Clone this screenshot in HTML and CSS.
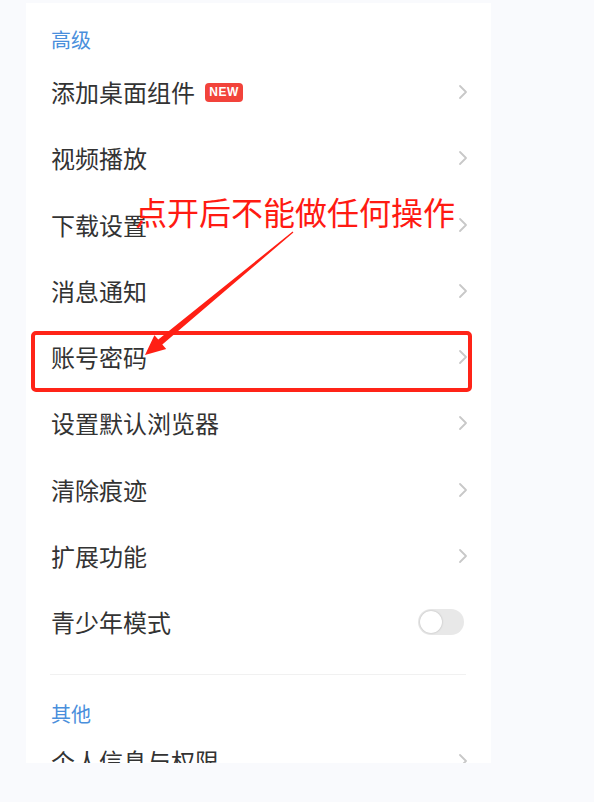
FILE: index.html
```html
<!DOCTYPE html>
<html lang="zh-CN">
<head>
<meta charset="utf-8">
<link rel="stylesheet" href="styles.css">
</head>
<body>
<div class="page">
  <div class="card">
    <div class="section-title first">高级</div>
    <div class="row"><span class="label">添加桌面组件</span><span class="badge">NEW</span><span class="chev"><svg width="10" height="16" viewBox="0 0 10 16"><path d="M2 2 L8 8 L2 14" fill="none" stroke="#c8c8c8" stroke-width="1.8" stroke-linecap="round" stroke-linejoin="round"/></svg></span></div>
    <div class="row"><span class="label">视频播放</span><span class="chev"><svg width="10" height="16" viewBox="0 0 10 16"><path d="M2 2 L8 8 L2 14" fill="none" stroke="#c8c8c8" stroke-width="1.8" stroke-linecap="round" stroke-linejoin="round"/></svg></span></div>
    <div class="row"><span class="label">下载设置</span><span class="chev"><svg width="10" height="16" viewBox="0 0 10 16"><path d="M2 2 L8 8 L2 14" fill="none" stroke="#c8c8c8" stroke-width="1.8" stroke-linecap="round" stroke-linejoin="round"/></svg></span></div>
    <div class="row"><span class="label">消息通知</span><span class="chev"><svg width="10" height="16" viewBox="0 0 10 16"><path d="M2 2 L8 8 L2 14" fill="none" stroke="#c8c8c8" stroke-width="1.8" stroke-linecap="round" stroke-linejoin="round"/></svg></span></div>
    <div class="row"><span class="label">账号密码</span><span class="chev"><svg width="10" height="16" viewBox="0 0 10 16"><path d="M2 2 L8 8 L2 14" fill="none" stroke="#c8c8c8" stroke-width="1.8" stroke-linecap="round" stroke-linejoin="round"/></svg></span></div>
    <div class="row"><span class="label">设置默认浏览器</span><span class="chev"><svg width="10" height="16" viewBox="0 0 10 16"><path d="M2 2 L8 8 L2 14" fill="none" stroke="#c8c8c8" stroke-width="1.8" stroke-linecap="round" stroke-linejoin="round"/></svg></span></div>
    <div class="row"><span class="label">清除痕迹</span><span class="chev"><svg width="10" height="16" viewBox="0 0 10 16"><path d="M2 2 L8 8 L2 14" fill="none" stroke="#c8c8c8" stroke-width="1.8" stroke-linecap="round" stroke-linejoin="round"/></svg></span></div>
    <div class="row"><span class="label">扩展功能</span><span class="chev"><svg width="10" height="16" viewBox="0 0 10 16"><path d="M2 2 L8 8 L2 14" fill="none" stroke="#c8c8c8" stroke-width="1.8" stroke-linecap="round" stroke-linejoin="round"/></svg></span></div>
    <div class="row"><span class="label">青少年模式</span><span class="toggle"><span class="knob"></span></span></div>
    <div class="divider"></div>
    <div class="section-title second">其他</div>
    <div class="row"><span class="label">个人信息与权限</span><span class="chev"><svg width="10" height="16" viewBox="0 0 10 16"><path d="M2 2 L8 8 L2 14" fill="none" stroke="#c8c8c8" stroke-width="1.8" stroke-linecap="round" stroke-linejoin="round"/></svg></span></div>
  </div>

  <div class="mark-box"></div>
  <div class="mark-text">点开后不能做任何操作</div>
  <svg class="mark-arrow" width="594" height="802" viewBox="0 0 594 802">
    <polygon points="293.4,232.5 292.6,231.5 158.3,339.6 154.4,335.2 145,355 166.2,349.1 162.3,344.6" fill="#ff1f14"/>
  </svg>
</div>
</body>
</html>
```

FILE: styles.css
```css
html, body {
  margin: 0;
  padding: 0;
  background: #f9fafd;
}

.page {
  position: relative;
  width: 594px;
  height: 802px;
  overflow: hidden;
  font-family: "Noto Sans CJK SC", "Noto Sans", sans-serif;
}

.card {
  margin-left: 26px;
  margin-top: 3px;
  width: 465px;
  height: 760px;
  background: #ffffff;
  overflow: hidden;
  box-sizing: border-box;
  padding: 24px 25px 0 25px;
}

.section-title {
  font-size: 20px;
  line-height: 26px;
  height: 26px;
  color: #4a8fdc;
}

.section-title.first {
  margin-bottom: 6px;
}

.section-title.second {
  margin-top: 26px;
  margin-bottom: 1px;
}

.row {
  display: flex;
  align-items: center;
  height: 66.25px;
}

.label {
  font-size: 24px;
  line-height: 30px;
  color: #333333;
}

.badge {
  margin-left: 10px;
  width: 38px;
  height: 19px;
  line-height: 19px;
  border-radius: 4px;
  background: #f2433b;
  color: #ffffff;
  font-family: "Liberation Sans", "Noto Sans", sans-serif;
  font-weight: bold;
  font-size: 12px;
  text-align: center;
  letter-spacing: 0.5px;
}

.chev {
  margin-left: auto;
  width: 10px;
  height: 16px;
  margin-right: -2px;
  display: flex;
}

.toggle {
  margin-left: auto;
  margin-right: 2px;
  width: 46px;
  height: 26px;
  border-radius: 13px;
  background: #e8e8e8;
  position: relative;
}

.knob {
  position: absolute;
  left: 2px;
  top: 2px;
  width: 22px;
  height: 22px;
  border-radius: 50%;
  background: #ffffff;
  box-shadow: 0 0 2px rgba(0, 0, 0, 0.25);
}

.divider {
  margin-top: 19px;
  height: 1px;
  background: #f1f1f1;
  margin-left: -1px;
}

.mark-box {
  position: absolute;
  left: 31px;
  top: 331px;
  width: 441px;
  height: 61px;
  box-sizing: border-box;
  border: 4px solid #ff2418;
  border-radius: 5px;
}

.mark-text {
  position: absolute;
  left: 135px;
  top: 190px;
  font-size: 32px;
  line-height: 42px;
  color: #ff1a12;
  white-space: nowrap;
}

.mark-arrow {
  position: absolute;
  left: 0;
  top: 0;
}
```
